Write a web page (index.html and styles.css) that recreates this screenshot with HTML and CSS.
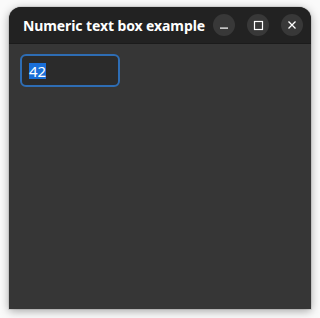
FILE: index.html
```html
<!DOCTYPE html>
<html>
<head>
<meta charset="utf-8">
<link rel="stylesheet" href="styles.css">
</head>
<body>
<div class="window">
  <div class="titlebar">
    <div class="title">Numeric text box example</div>
    <div class="buttons">
      <div class="btn"><svg width="22" height="22" viewBox="0 0 22 22"><rect x="7" y="13.5" width="8" height="1.2" fill="#fff"/></svg></div>
      <div class="btn"><svg width="22" height="22" viewBox="0 0 22 22"><rect x="7.5" y="7.5" width="8" height="8" fill="none" stroke="#fff" stroke-width="1.2"/></svg></div>
      <div class="btn"><svg width="22" height="22" viewBox="0 0 22 22"><path d="M7.5 7.5 L14.5 14.5 M14.5 7.5 L7.5 14.5" stroke="#fff" stroke-width="1.3" fill="none"/></svg></div>
    </div>
  </div>
  <div class="content">
    <div class="numbox"><span class="sel">42</span></div>
  </div>
</div>
</body>
</html>
```
FILE: styles.css
```css
html, body {
  margin: 0;
  padding: 0;
  background: #fafafa;
  width: 320px;
  height: 318px;
  overflow: hidden;
}
.window {
  margin: 7px 9px;
  width: 302px;
  height: 302px;
  border-radius: 12px 12px 0 0;
  background: #363636;
  box-shadow: 0 2px 10px rgba(0,0,0,0.35), 0 0 0 1px rgba(0,0,0,0.08);
  overflow: hidden;
  display: flex;
  flex-direction: column;
  font-family: "Noto Sans", "Open Sans", sans-serif;
}
.titlebar {
  height: 37px;
  background: #222222;
  border-bottom: 1px solid #1b1b1b;
  display: flex;
  align-items: center;
  justify-content: space-between;
  padding: 0 8px 0 14px;
  box-sizing: border-box;
  flex: none;
}
.title {
  color: #ffffff;
  font-weight: bold;
  font-size: 14px;
  white-space: nowrap;
  letter-spacing: -0.1px;
}
.buttons {
  display: flex;
  gap: 12px;
}
.btn {
  width: 22px;
  height: 22px;
  border-radius: 50%;
  background: #383838;
  display: flex;
}
.content {
  flex: 1;
  padding: 10px 11px;
}
.numbox {
  width: 100px;
  height: 33px;
  box-sizing: border-box;
  border: 2px solid #2e6db4;
  border-radius: 6px;
  background: #2b2b2b;
  display: flex;
  align-items: center;
  padding-left: 7px;
}
.sel {
  background: #1a6fd8;
  color: #ffffff;
  font-size: 15px;
  line-height: 16px;
  height: 16px;
}
```
